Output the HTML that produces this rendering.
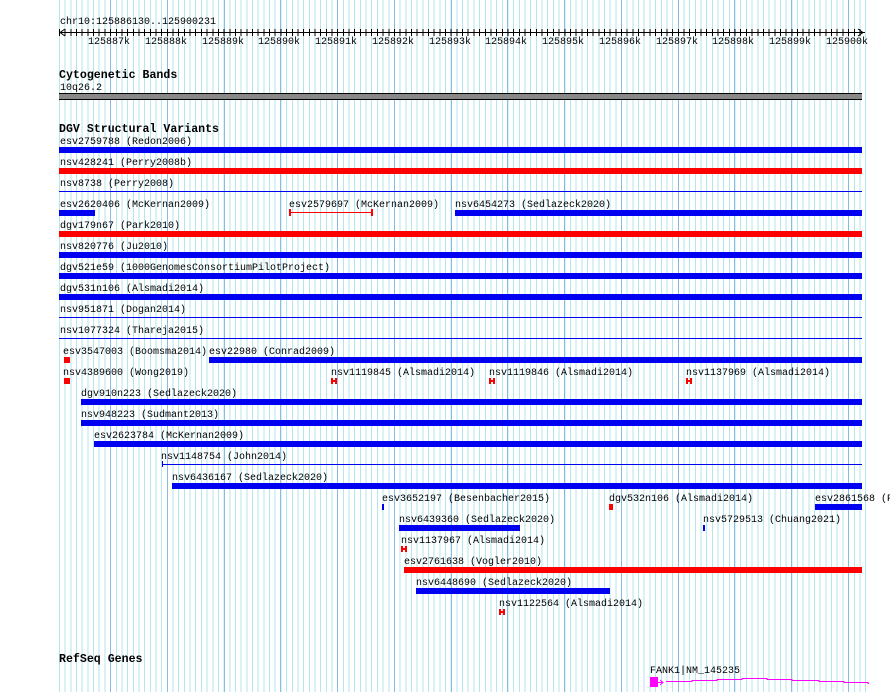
<!DOCTYPE html>
<html><head><style>
body{margin:0;width:890px;height:692px;background:#fff;position:relative;overflow:hidden;font-family:"Liberation Mono",monospace}
.g{position:absolute;left:59px;top:0;width:810px;height:692px;background:repeating-linear-gradient(90deg,#b4e6ee 0,#b4e6ee 1px,transparent 1px,transparent 5.677px)}
.M{position:absolute;top:0;width:1px;height:692px;background:#86bde6}
.t{position:absolute;font-size:10px;line-height:10px;white-space:pre;color:#000;margin-top:3px}
.h{position:absolute;font-size:11.6px;font-weight:bold;line-height:12px;white-space:pre;margin-top:2px}
.b{position:absolute;height:6px;background:#0000f0}
.r{background:#ff0000}
.n{position:absolute;height:1px;background:#0000f0}
</style></head><body>
<div class="g"></div>
<div class="M" style="left:110px"></div><div class="M" style="left:167px"></div><div class="M" style="left:224px"></div><div class="M" style="left:280px"></div><div class="M" style="left:337px"></div><div class="M" style="left:394px"></div><div class="M" style="left:451px"></div><div class="M" style="left:507px"></div><div class="M" style="left:564px"></div><div class="M" style="left:621px"></div><div class="M" style="left:678px"></div><div class="M" style="left:734px"></div><div class="M" style="left:791px"></div><div class="M" style="left:848px"></div>
<div style="position:absolute;left:0;top:0;width:59px;height:692px;background:#fff"></div>
<div class="t" style="left:60px;top:15px">chr10:125886130..125900231</div>
<div style="position:absolute;left:61px;top:32px;width:804px;height:1px;background:#000"></div>
<svg style="position:absolute;left:59px;top:28px" width="12" height="10"><path d="M6 1 L1 4.5 L6 8" stroke="#000" fill="none"/></svg>
<svg style="position:absolute;left:856px;top:28px" width="12" height="10"><path d="M2 1 L7 4.5 L2 8" stroke="#000" fill="none"/></svg>
<div style="position:absolute;left:59px;top:29px;width:806px;height:7px;background:repeating-linear-gradient(90deg,#000 0,#000 1px,transparent 1px,transparent 5.677px)"></div>
<div class="t" style="left:88px;top:35px">125887k</div><div class="t" style="left:145px;top:35px">125888k</div><div class="t" style="left:202px;top:35px">125889k</div><div class="t" style="left:258px;top:35px">125890k</div><div class="t" style="left:315px;top:35px">125891k</div><div class="t" style="left:372px;top:35px">125892k</div><div class="t" style="left:429px;top:35px">125893k</div><div class="t" style="left:485px;top:35px">125894k</div><div class="t" style="left:542px;top:35px">125895k</div><div class="t" style="left:599px;top:35px">125896k</div><div class="t" style="left:656px;top:35px">125897k</div><div class="t" style="left:712px;top:35px">125898k</div><div class="t" style="left:769px;top:35px">125899k</div><div class="t" style="left:826px;top:35px">125900k</div>

<div class="h" style="left:59px;top:68px">Cytogenetic Bands</div>
<div class="t" style="left:60px;top:81px">10q26.2</div>
<div style="position:absolute;left:59px;top:93px;width:803px;height:5px;background:#888;border-top:1px solid #000;border-bottom:1px solid #000"></div>

<div class="h" style="left:59px;top:122px">DGV Structural Variants</div>
<div class="t" style="left:60px;top:135px">esv2759788 (Redon2006)</div><div class="b" style="left:59px;width:803px;top:147px"></div>
<div class="t" style="left:60px;top:156px">nsv428241 (Perry2008b)</div><div class="b r" style="left:59px;width:803px;top:168px"></div>
<div class="t" style="left:60px;top:177px">nsv8738 (Perry2008)</div><div class="n" style="left:59px;width:803px;top:191px"></div>
<div class="t" style="left:60px;top:198px">esv2620406 (McKernan2009)</div><div class="b" style="left:59px;width:36px;top:210px"></div>
<div class="t" style="left:289px;top:198px">esv2579697 (McKernan2009)</div>
<div style="position:absolute;left:290px;top:212px;width:82px;height:1px;background:#f00"></div><div style="position:absolute;left:289px;top:209px;width:2px;height:7px;background:#f00"></div><div style="position:absolute;left:371px;top:209px;width:2px;height:7px;background:#f00"></div>
<div class="t" style="left:455px;top:198px">nsv6454273 (Sedlazeck2020)</div><div class="b" style="left:455px;width:407px;top:210px"></div>
<div class="t" style="left:60px;top:219px">dgv179n67 (Park2010)</div><div class="b r" style="left:59px;width:803px;top:231px"></div>
<div class="t" style="left:60px;top:240px">nsv820776 (Ju2010)</div><div class="b" style="left:59px;width:803px;top:252px"></div>
<div class="t" style="left:60px;top:261px">dgv521e59 (1000GenomesConsortiumPilotProject)</div><div class="b" style="left:59px;width:803px;top:273px"></div>
<div class="t" style="left:60px;top:282px">dgv531n106 (Alsmadi2014)</div><div class="b" style="left:59px;width:803px;top:294px"></div>
<div class="t" style="left:60px;top:303px">nsv951871 (Dogan2014)</div><div class="n" style="left:59px;width:803px;top:317px"></div>
<div class="t" style="left:60px;top:324px">nsv1077324 (Thareja2015)</div><div class="n" style="left:59px;width:803px;top:338px"></div>
<div class="t" style="left:63px;top:345px">esv3547003 (Boomsma2014)</div><div class="b r" style="left:64px;width:6px;top:357px"></div>
<div class="t" style="left:209px;top:345px">esv22980 (Conrad2009)</div><div class="b" style="left:209px;width:653px;top:357px"></div>
<div class="t" style="left:63px;top:366px">nsv4389600 (Wong2019)</div><div class="b r" style="left:64px;width:6px;top:378px"></div>
<div class="t" style="left:331px;top:366px">nsv1119845 (Alsmadi2014)</div>
<div class="t" style="left:489px;top:366px">nsv1119846 (Alsmadi2014)</div>
<div class="t" style="left:686px;top:366px">nsv1137969 (Alsmadi2014)</div>
<svg style="position:absolute;left:331px;top:378px" width="6" height="6"><path d="M0 0h2v6h-2zM4 0h2v6h-2zM2 2h2v2h-2z" fill="#f00"/></svg>
<svg style="position:absolute;left:489px;top:378px" width="6" height="6"><path d="M0 0h2v6h-2zM4 0h2v6h-2zM2 2h2v2h-2z" fill="#f00"/></svg>
<svg style="position:absolute;left:686px;top:378px" width="6" height="6"><path d="M0 0h2v6h-2zM4 0h2v6h-2zM2 2h2v2h-2z" fill="#f00"/></svg>
<div class="t" style="left:81px;top:387px">dgv910n223 (Sedlazeck2020)</div><div class="b" style="left:81px;width:781px;top:399px"></div>
<div class="t" style="left:81px;top:408px">nsv948223 (Sudmant2013)</div><div class="b" style="left:81px;width:781px;top:420px"></div>
<div class="t" style="left:94px;top:429px">esv2623784 (McKernan2009)</div><div class="b" style="left:94px;width:768px;top:441px"></div>
<div class="t" style="left:161px;top:450px">nsv1148754 (John2014)</div><div class="n" style="left:162px;width:700px;top:464px"></div><div style="position:absolute;left:162px;top:461px;width:1px;height:6px;background:#00f"></div>
<div class="t" style="left:172px;top:471px">nsv6436167 (Sedlazeck2020)</div><div class="b" style="left:172px;width:690px;top:483px"></div>
<div class="t" style="left:382px;top:492px">esv3652197 (Besenbacher2015)</div><div class="b" style="left:382px;width:2px;top:504px"></div>
<div class="t" style="left:609px;top:492px">dgv532n106 (Alsmadi2014)</div><div class="b r" style="left:609px;width:4px;top:504px"></div>
<div class="t" style="left:815px;top:492px">esv2861568 (P</div><div class="b" style="left:815px;width:47px;top:504px"></div>
<div class="t" style="left:399px;top:513px">nsv6439360 (Sedlazeck2020)</div><div class="b" style="left:399px;width:121px;top:525px"></div>
<div class="t" style="left:703px;top:513px">nsv5729513 (Chuang2021)</div><div class="b" style="left:703px;width:2px;top:525px"></div>
<div class="t" style="left:401px;top:534px">nsv1137967 (Alsmadi2014)</div>
<svg style="position:absolute;left:401px;top:546px" width="6" height="6"><path d="M0 0h2v6h-2zM4 0h2v6h-2zM2 2h2v2h-2z" fill="#f00"/></svg>
<div class="t" style="left:404px;top:555px">esv2761638 (Vogler2010)</div><div class="b r" style="left:404px;width:458px;top:567px"></div>
<div class="t" style="left:416px;top:576px">nsv6448690 (Sedlazeck2020)</div><div class="b" style="left:416px;width:194px;top:588px"></div>
<div class="t" style="left:499px;top:597px">nsv1122564 (Alsmadi2014)</div>
<svg style="position:absolute;left:499px;top:609px" width="6" height="6"><path d="M0 0h2v6h-2zM4 0h2v6h-2zM2 2h2v2h-2z" fill="#f00"/></svg>

<div class="h" style="left:59px;top:652px">RefSeq Genes</div>
<div class="t" style="left:650px;top:664px">FANK1|NM_145235</div>
<svg style="position:absolute;left:649px;top:675px" width="220" height="17"><rect x="1" y="2" width="8" height="10" fill="#f0f"/><path d="M9 7.5h4M11 5l3 2.5-3 2.5M17 6.5h26v-1h25v-1h25v-1h25v1h25v1h27v1h25v1h24v1h12" stroke="#f0f" fill="none"/></svg>
</body></html>
